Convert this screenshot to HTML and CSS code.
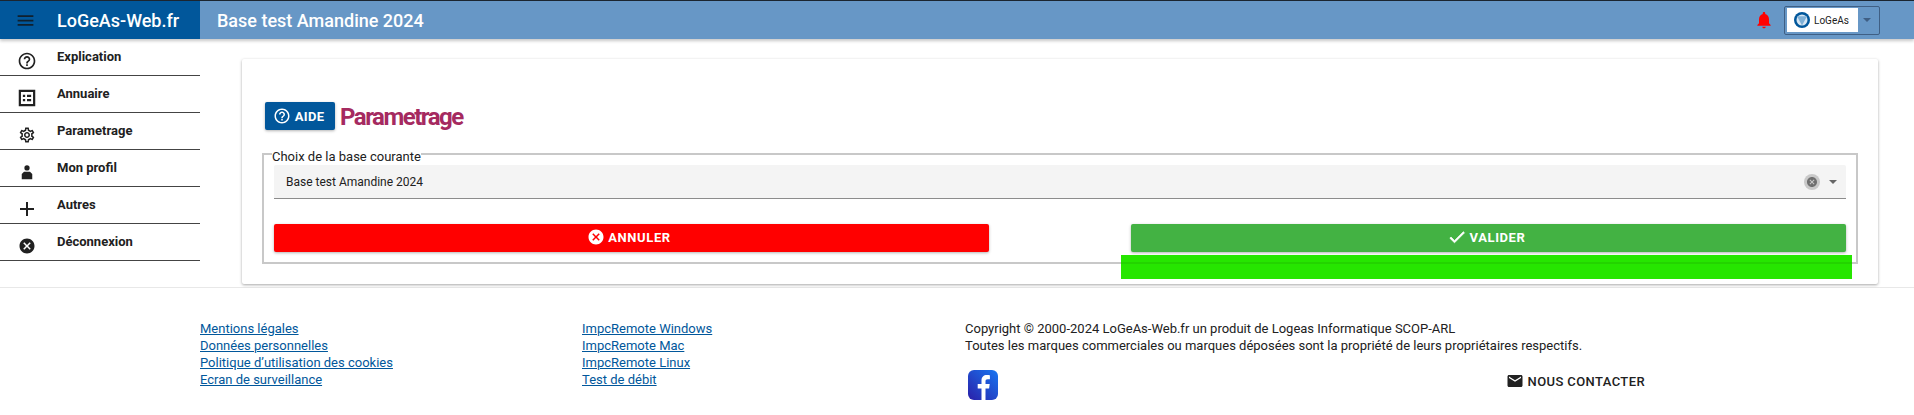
FILE: index.html
```html
<!DOCTYPE html>
<html lang="fr">
<head>
<meta charset="utf-8">
<title>LoGeAs-Web.fr</title>
<link rel="stylesheet" href="styles.css">
</head>
<body>
<header class="topbar">
  <div class="brand">
    <svg class="burger" viewBox="0 0 24 24" width="21" height="21"><path d="M3 18h18v-2H3zm0-5h18v-2H3zm0-7v2h18V6z"/></svg>
    <span class="brand-name">LoGeAs-Web.fr</span>
  </div>
  <div class="titlebar">
    <span class="base-title">Base test Amandine 2024</span>
    <svg class="bell" viewBox="0 0 24 24" width="20" height="20"><path d="M12 22c1.100 0 2-.9 2-2h-4c0 1.100.9 2 2 2zm6-6v-5c0-3.070-1.630-5.640-4.500-6.320V4c0-.83-.67-1.500-1.500-1.500s-1.500.67-1.500 1.500v.68C7.640 5.360 6 7.920 6 11v5l-2 2v1h16v-1z"/></svg>
    <div class="account">
      <div class="account-chip">
        <svg class="account-logo" viewBox="0 0 16 16" width="16" height="16"><circle cx="8" cy="8" r="8" fill="#01579b"/><circle cx="8" cy="8" r="5.500" fill="#d6e6f3"/><path d="M3 4.200h10L8 13.500z" fill="#7fb0d6"/></svg>
        <span>LoGeAs</span>
      </div>
      <span class="account-caret"></span>
    </div>
  </div>
</header>
<div class="main-row">
  <nav class="sidenav">
    <a class="nav-item"><svg viewBox="0 0 24 24" width="20" height="20"><path d="M11 18h2v-2h-2zm1-16C6.480 2 2 6.480 2 12s4.480 10 10 10 10-4.480 10-10S17.520 2 12 2zm0 18c-4.410 0-8-3.590-8-8s3.590-8 8-8 8 3.590 8 8-3.590 8-8 8zm0-14c-2.210 0-4 1.790-4 4h2c0-1.100.9-2 2-2s2 .9 2 2c0 2-3 1.750-3 5h2c0-2.250 3-2.500 3-5 0-2.210-1.790-4-4-4z"/></svg><span>Explication</span></a>
    <a class="nav-item"><svg viewBox="0 0 24 24" width="22" height="22"><path d="M3 3h18v18H3zm2.400 2.400v13.200h13.200V5.400zM7.500 8.500h2.500V11H7.500zm4.500 0h4.500V11H12zm-4.500 4.500h2.500v2.500H7.500zm4.500 0h4.500v2.500H12z" fill-rule="evenodd"/></svg><span>Annuaire</span></a>
    <a class="nav-item"><svg viewBox="0 0 24 24" width="18" height="18"><path d="M19.430 12.980c.04-.32.07-.64.07-.98s-.03-.66-.07-.98l2.110-1.650c.19-.15.24-.42.12-.64l-2-3.460c-.12-.22-.39-.3-.61-.22l-2.490 1c-.52-.4-1.080-.73-1.690-.98l-.38-2.650A.49.49 0 0 0 14 2h-4c-.25 0-.46.18-.49.42l-.38 2.650c-.61.25-1.170.59-1.690.98l-2.490-1a.5.5 0 0 0-.61.22l-2 3.460c-.13.22-.07.49.12.64l2.110 1.650c-.04.32-.07.65-.07.98s.03.66.07.98l-2.110 1.650c-.19.15-.24.42-.12.64l2 3.460c.12.22.39.3.61.22l2.490-1c.52.4 1.080.73 1.690.98l.38 2.650c.03.24.24.42.49.42h4c.25 0 .46-.18.49-.42l.38-2.650c.61-.25 1.170-.59 1.690-.98l2.490 1c.23.09.49 0 .61-.22l2-3.460c.12-.22.07-.49-.12-.64zm-1.980-1.710c.04.31.05.52.05.73s-.02.43-.05.73l-.14 1.130.89.7 1.080.84-.7 1.210-1.270-.51-1.040-.42-.9.68c-.43.32-.84.56-1.250.73l-1.060.43-.16 1.130-.2 1.350h-1.400l-.19-1.350-.16-1.130-1.060-.43c-.43-.18-.83-.41-1.230-.71l-.91-.7-1.060.43-1.270.51-.7-1.210 1.080-.84.89-.7-.14-1.130c-.03-.31-.05-.54-.05-.74s.02-.43.05-.73l.14-1.130-.89-.7-1.080-.84.7-1.210 1.270.51 1.040.42.9-.68c.43-.32.84-.56 1.250-.73l1.060-.43.16-1.130.2-1.350h1.390l.19 1.350.16 1.130 1.060.43c.43.18.83.41 1.230.71l.91.7 1.060-.43 1.270-.51.7 1.210-1.070.85-.89.7zM12 8c-2.210 0-4 1.790-4 4s1.790 4 4 4 4-1.790 4-4-1.790-4-4-4zm0 6c-1.100 0-2-.9-2-2s.9-2 2-2 2 .9 2 2-.9 2-2 2z"/></svg><span>Parametrage</span></a>
    <a class="nav-item"><svg viewBox="0 0 24 24" width="18" height="18"><circle cx="12" cy="6.500" r="3.500"/><path d="M8 11.500h8l3 3v7H5v-7z"/></svg><span>Mon profil</span></a>
    <a class="nav-item"><svg viewBox="0 0 24 24" width="24" height="24"><path d="M19 13h-6v6h-2v-6H5v-2h6V5h2v6h6z"/></svg><span>Autres</span></a>
    <a class="nav-item"><svg viewBox="0 0 24 24" width="18" height="18"><path d="M12 2C6.470 2 2 6.470 2 12s4.470 10 10 10 10-4.470 10-10S17.530 2 12 2zm5 13.590L15.590 17 12 13.410 8.410 17 7 15.590 10.590 12 7 8.410 8.410 7 12 10.590 15.590 7 17 8.410 13.410 12z"/></svg><span>Déconnexion</span></a>
  </nav>
  <main class="content">
    <section class="card">
      <div class="title-row">
        <button class="btn btn-help"><svg viewBox="0 0 24 24" width="18" height="18"><path d="M11 18h2v-2h-2zm1-16C6.480 2 2 6.480 2 12s4.480 10 10 10 10-4.480 10-10S17.520 2 12 2zm0 18c-4.410 0-8-3.590-8-8s3.590-8 8-8 8 3.590 8 8-3.590 8-8 8zm0-14c-2.210 0-4 1.790-4 4h2c0-1.100.9-2 2-2s2 .9 2 2c0 2-3 1.750-3 5h2c0-2.250 3-2.500 3-5 0-2.210-1.790-4-4-4z"/></svg>AIDE</button>
        <h1 class="page-title">Parametrage</h1>
      </div>
      <div class="base-box">
        <div class="legend">Choix de la base courante</div>
        <div class="select">
          <span class="select-value">Base test Amandine 2024</span>
          <span class="select-clear"><svg viewBox="0 0 24 24" width="12" height="12"><path d="M12 2C6.470 2 2 6.470 2 12s4.470 10 10 10 10-4.470 10-10S17.530 2 12 2zm5 13.590L15.590 17 12 13.410 8.410 17 7 15.590 10.590 12 7 8.410 8.410 7 12 10.590 15.590 7 17 8.410 13.410 12z"/></svg></span>
          <span class="select-caret"></span>
        </div>
        <div class="actions">
          <button class="btn btn-cancel"><svg viewBox="0 0 24 24" width="18" height="18"><path d="M12 2C6.470 2 2 6.470 2 12s4.470 10 10 10 10-4.470 10-10S17.530 2 12 2zm5 13.590L15.590 17 12 13.410 8.410 17 7 15.590 10.590 12 7 8.410 8.410 7 12 10.590 15.590 7 17 8.410 13.410 12z"/></svg>ANNULER</button>
          <button class="btn btn-ok"><svg viewBox="0 0 24 24" width="20" height="20"><path d="M9 16.170 4.830 12l-1.420 1.410L9 19 21 7l-1.410-1.410z"/></svg>VALIDER</button>
        </div>
      </div>
      <div class="green-band"></div>
    </section>
  </main>
</div>
<footer class="footer">
  <ul class="links">
    <li><a>Mentions légales</a></li>
    <li><a>Données personnelles</a></li>
    <li><a>Politique d’utilisation des cookies</a></li>
    <li><a>Ecran de surveillance</a></li>
  </ul>
  <ul class="links links-remote">
    <li><a>ImpcRemote Windows</a></li>
    <li><a>ImpcRemote Mac</a></li>
    <li><a>ImpcRemote Linux</a></li>
    <li><a>Test de débit</a></li>
  </ul>
  <div class="legal">
    <p>Copyright © 2000-2024 LoGeAs-Web.fr un produit de Logeas Informatique SCOP-ARL</p>
    <p>Toutes les marques commerciales ou marques déposées sont la propriété de leurs propriétaires respectifs.</p>
    <div class="legal-row">
      <svg class="fb" viewBox="0 0 30 30" width="30" height="30"><defs><linearGradient id="fbg" x1="0" y1="1" x2="1" y2="0"><stop offset="0" stop-color="#2a1fa8"/><stop offset="1" stop-color="#1877f2"/></linearGradient></defs><rect width="30" height="30" rx="6" fill="url(#fbg)"/><path d="M20.500 30V18.500h3.600l.6-4.500h-4.200v-2.600c0-1.300.5-2.200 2.300-2.200h2.100V5.300c-.5-.1-1.800-.2-3.100-.2-3.100 0-5.300 1.900-5.300 5.400V14h-3.800v4.500H16.500V30z" fill="#fff" transform="translate(-3 0)"/></svg>
      <a class="contact"><svg viewBox="0 0 24 24" width="18" height="18"><path d="M20 4H4c-1.100 0-2 .9-2 2v12c0 1.100.9 2 2 2h16c1.100 0 2-.9 2-2V6c0-1.100-.9-2-2-2zm0 4-8 5-8-5V6l8 5 8-5z"/></svg>NOUS CONTACTER</a>
    </div>
  </div>
</footer>
</body>
</html>
```
FILE: styles.css
```css
* { box-sizing: border-box; }
html, body { margin: 0; padding: 0; height: 100%; overflow: hidden; background: #fff; }
body { font-family: Roboto, "Liberation Sans", sans-serif; color: #212121; border-top: 1px solid #1b2530; }

.topbar { display: flex; height: 38px; box-shadow: 0 2px 3px rgba(0,0,0,.22); position: relative; z-index: 2; }
.brand { width: 200px; background: #01579b; display: flex; align-items: center; color: #fff; }
.burger { margin-left: 15px; fill: #10202e; }
.brand-name { margin-left: 21px; font-size: 18px; font-weight: 500; }
.titlebar { flex: 1; background: #6797c6; display: flex; align-items: center; color: #fff; padding-left: 17px; }
.base-title { font-size: 18px; font-weight: 500; flex: 1; }
.bell { fill: #ff0000; margin-right: 10px; }
.account { width: 96px; height: 29px; margin-right: 34px; border: 1px solid #3f5f84; border-radius: 2px; display: flex; align-items: center; padding-left: 2px; }
.account-chip { width: 71px; height: 24px; background: #fff; display: flex; align-items: center; padding-left: 7px; gap: 4px; color: #212121; font-size: 10px; }
.account-caret { margin-left: 5px; border-left: 4px solid transparent; border-right: 4px solid transparent; border-top: 4px solid #3f5f84; }

.main-row { display: flex; height: 248px; }
.sidenav { width: 200px; flex: none; }
.nav-item { display: flex; height: 37px; border-bottom: 1px solid #444; position: relative; padding-left: 57px; padding-top: 8px; font-size: 13px; font-weight: 700; color: #212121; line-height: 20px; }
.nav-item svg { position: absolute; left: 27px; top: 60%; transform: translate(-50%, -50%); fill: #212121; }

.content { flex: 1; padding: 20px 0 0 42px; }
.card { width: 1636px; height: 225px; background: #fff; border-radius: 2px; box-shadow: 0 1px 3px rgba(0,0,0,.35); padding: 43px 18px 0 20px; position: relative; }
.title-row { display: flex; align-items: center; gap: 5px; height: 28px; padding-left: 3px; }
.btn { border: 0; display: flex; align-items: center; justify-content: center; color: #fff; font-family: inherit; font-weight: 700; font-size: 13px; letter-spacing: .6px; border-radius: 2px; box-shadow: 0 1px 3px rgba(0,0,0,.3); }
.btn-help { width: 70px; height: 28px; background: #01579b; gap: 4px; letter-spacing: .3px; padding: 0 3px 0 0; }
.page-title { margin: 0; padding-top: 2px; font-size: 24px; font-weight: 700; letter-spacing: -1.500px; color: #a52a60; }

.base-box { position: relative; margin-top: 23px; padding: 10px 10px 0; border: 2px solid #c8c8c8; width: 1596px; height: 111px; }
.legend { position: absolute; left: 8px; top: -5px; background: #fff; font-size: 13px; line-height: 14px; color: #212121; }
.select { height: 34px; background: #f4f4f4; border-bottom: 1px solid #8c8c8c; border-radius: 2px 2px 0 0; display: flex; align-items: center; padding: 0 9px 0 12px; font-size: 12px; color: #212121; }
.select-value { flex: 1; }
.select-clear { width: 16px; height: 16px; border-radius: 50%; background: #c9c9c9; display: flex; align-items: center; justify-content: center; margin-right: 9px; }
.select-clear svg { fill: #6f6f6f; }
.select-caret { border-left: 4px solid transparent; border-right: 4px solid transparent; border-top: 4px solid #666; }
.actions { display: flex; justify-content: space-between; margin-top: 25px; }
.actions .btn { width: 715px; height: 28px; gap: 3px; padding: 0 5px 2px 0; }
.btn-cancel { background: #ff0000; }
.btn-ok { background: #43b243; }
.btn svg { fill: #fff; }
.btn-ok svg { stroke: #fff; stroke-width: .8; }
.green-band { position: absolute; left: 879px; top: 196px; width: 731px; height: 24px; background: #26e600; }
.green-band::after { content: ""; position: absolute; left: 0; right: 0; top: 7px; height: 2px; background: rgba(0,0,0,.08); }

.footer { display: flex; border-top: 1px solid #e8e8e8; padding: 32px 0 0 200px; height: 128px; font-size: 13px; line-height: 17px; }
.links { list-style: none; margin: 0; padding: 0; width: 382px; }
.links a { color: #01579b; text-decoration: underline; }
.links-remote { width: 383px; }
.legal { width: 680px; color: #212121; }
.legal p { margin: 0; }
.legal-row { display: flex; justify-content: space-between; align-items: flex-start; margin-top: 16px; padding-left: 3px; }
.fb { display: block; }
.contact { display: flex; align-items: center; gap: 4px; font-weight: 500; letter-spacing: .4px; margin-top: 2px; }
.contact svg { fill: #212121; }
```
